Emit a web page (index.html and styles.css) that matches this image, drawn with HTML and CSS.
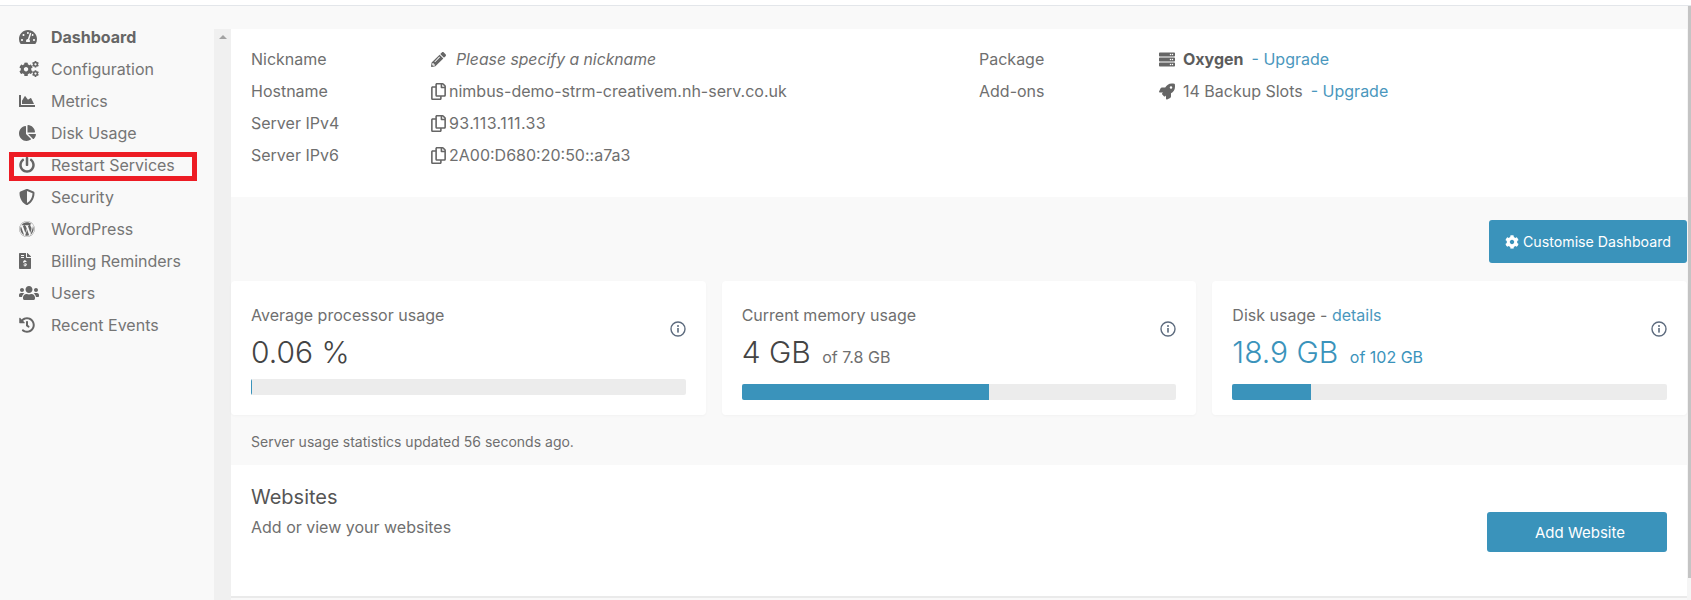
FILE: index.html
```html
<!DOCTYPE html>
<html lang="en">
<head>
    <meta charset="UTF-8">
    <meta name="viewport" content="width=device-width, initial-scale=1.0">
    <title>Server Dashboard</title>
    <link rel="stylesheet" href="styles.css">
</head>
<body>
    <!-- Icon definitions -->
    <svg class="icon-defs" xmlns="http://www.w3.org/2000/svg">
        <symbol id="i-dashboard" viewBox="0 0 576 512" preserveAspectRatio="xMinYMid"><path d="M288 32C128.94 32 0 160.94 0 320c0 52.8 14.25 102.26 39.06 144.8 5.61 9.62 16.3 15.2 27.44 15.2h443c11.14 0 21.83-5.58 27.44-15.2C561.75 422.26 576 372.8 576 320c0-159.06-128.94-288-288-288zm0 64c14.71 0 26.58 10.13 30.32 23.65-1.11 2.26-2.64 4.23-3.45 6.67l-9.22 27.67c-5.13 3.49-10.97 6.01-17.64 6.01-17.67 0-32-14.33-32-32S270.33 96 288 96zM96 384c-17.67 0-32-14.33-32-32s14.33-32 32-32 32 14.33 32 32-14.33 32-32 32zm48-160c-17.67 0-32-14.33-32-32s14.33-32 32-32 32 14.33 32 32-14.33 32-32 32zm246.77-72.41l-61.33 184C343.13 347.33 352 364.54 352 384c0 11.72-3.38 22.55-8.88 32H232.88c-5.5-9.45-8.88-20.28-8.88-32 0-33.94 26.5-61.43 59.9-63.59l61.34-184.01c4.17-12.56 17.73-19.45 30.36-15.17 12.57 4.19 19.35 17.79 15.17 30.36zm14.66 57.2l15.52-46.55c3.47-1.29 7.13-2.23 11.05-2.23 17.67 0 32 14.33 32 32s-14.33 32-32 32c-11.38-.01-20.89-6.28-26.57-15.22zM480 384c-17.67 0-32-14.33-32-32s14.33-32 32-32 32 14.33 32 32-14.33 32-32 32z"/></symbol>
        <symbol id="i-cog" viewBox="0 0 512 512"><path d="M487.4 315.7l-42.6-24.6c4.3-23.2 4.3-47 0-70.2l42.6-24.6c4.9-2.8 7.1-8.6 5.5-14-11.1-35.6-30-67.8-54.7-94.6-3.8-4.1-10-5.1-14.8-2.3L380.8 110c-17.9-15.4-38.5-27.3-60.8-35.1V25.8c0-5.6-3.9-10.5-9.4-11.7-36.7-8.2-74.3-7.8-109.2 0-5.5 1.2-9.4 6.1-9.4 11.7V75c-22.2 7.9-42.8 19.8-60.8 35.1L88.7 85.5c-4.9-2.8-11-1.9-14.8 2.3-24.7 26.7-43.6 58.9-54.7 94.6-1.7 5.4.6 11.2 5.5 14L67.3 221c-4.3 23.2-4.3 47 0 70.2l-42.6 24.6c-4.9 2.8-7.1 8.6-5.5 14 11.1 35.6 30 67.8 54.7 94.6 3.8 4.1 10 5.1 14.8 2.3l42.6-24.6c17.9 15.4 38.5 27.3 60.8 35.1v49.2c0 5.6 3.9 10.5 9.4 11.7 36.7 8.2 74.3 7.8 109.2 0 5.5-1.2 9.4-6.1 9.4-11.7v-49.2c22.2-7.9 42.8-19.8 60.8-35.1l42.6 24.6c4.9 2.8 11 1.9 14.8-2.3 24.7-26.7 43.6-58.9 54.7-94.6 1.5-5.5-.7-11.3-5.6-14.1zM256 336c-44.1 0-80-35.9-80-80s35.9-80 80-80 80 35.9 80 80-35.9 80-80 80z"/></symbol>
        <symbol id="i-cogs" viewBox="0 0 640 512">
            <use href="#i-cog" x="0" y="40" width="450" height="450"/>
            <use href="#i-cog" x="415" y="-6" width="225" height="225"/>
            <use href="#i-cog" x="415" y="290" width="225" height="225"/>
        </symbol>
        <symbol id="i-chart" viewBox="0 0 512 512" preserveAspectRatio="xMinYMid"><path d="M500 384c6.6 0 12 5.4 12 12v40c0 6.6-5.4 12-12 12H12c-6.6 0-12-5.4-12-12V76c0-6.6 5.4-12 12-12h40c6.6 0 12 5.4 12 12v308h436zM372.7 159.5L288 216l-85.3-113.7c-5.1-6.8-15.5-6.3-19.9 1L96 248v104h384l-89.9-187.8c-3.2-6.5-11.4-8.7-17.4-4.7z"/></symbol>
        <symbol id="i-pie" viewBox="0 0 544 512" preserveAspectRatio="xMinYMid"><path d="M527.79 288H290.5l158.03 158.03c6.04 6.04 15.98 6.53 22.19.68 38.7-36.46 65.32-85.61 73.13-140.86 1.34-9.46-6.51-17.85-16.06-17.85zm-15.83-64.8C503.72 103.74 408.26 8.28 288.8.04 279.68-.59 272 7.1 272 16.24V240h223.77c9.14 0 16.82-7.68 16.19-16.8zM224 288V50.71c0-9.55-8.39-17.4-17.84-16.06C86.99 51.49-4.1 155.6.14 280.37 4.5 408.51 114.83 513.59 243.03 511.98c50.4-.63 96.97-16.87 135.26-44.03 7.9-5.6 8.42-17.23 1.57-24.08L224 288z"/></symbol>
        <symbol id="i-power" viewBox="0 0 512 512" preserveAspectRatio="xMinYMid"><path d="M400 54.1c63 45 104 118.6 104 201.9 0 136.8-110.8 247.7-247.5 248C120 504.3 8.2 393 8 256.4 7.9 173.1 48.9 99.3 111.8 54.2c11.7-8.3 28-4.8 35 7.7L162.6 90c5.9 10.5 3.1 23.8-6.6 31-41.5 30.8-68 79.6-68 134.9-.1 92.3 74.5 168.1 168 168.1 91.6 0 168.6-74.2 168-169.1-.3-51.8-24.7-101.8-68.1-134-9.7-7.2-12.4-20.5-6.5-30.9l15.8-28.1c7-12.4 23.2-16.1 34.8-7.8zM296 264V24c0-13.3-10.7-24-24-24h-32c-13.3 0-24 10.7-24 24v240c0 13.3 10.7 24 24 24h32c13.3 0 24-10.7 24-24z"/></symbol>
        <symbol id="i-shield" viewBox="0 0 512 512" preserveAspectRatio="xMinYMid"><path d="M466.5 83.7l-192-80a48.15 48.15 0 0 0-36.9 0l-192 80C27.7 91.1 16 108.6 16 128c0 198.5 114.5 335.7 221.5 380.3 11.8 4.9 25.1 4.9 36.9 0C360.1 472.6 496 349.3 496 128c0-19.4-11.7-36.9-29.5-44.3zM256.1 446.3l-.1-381 175.9 73.3c-3.3 151.4-82.1 261.1-175.8 307.7z"/></symbol>
        <symbol id="i-wordpress" viewBox="0 0 512 512" preserveAspectRatio="xMinYMid"><path d="M61.7 169.4l101.5 278C92.2 413 43.3 340.2 43.3 256c0-30.9 6.6-60.1 18.4-86.6zm337.9 75.9c0-26.3-9.4-44.5-17.5-58.7-10.8-17.5-20.9-32.4-20.9-49.9 0-19.6 14.8-37.8 35.7-37.8.9 0 1.8.1 2.8.2-37.9-34.7-88.3-55.9-143.7-55.9-74.3 0-139.7 38.1-177.8 95.9 5 .2 9.7.3 13.7.3 22.2 0 56.7-2.7 56.7-2.7 11.5-.7 12.8 16.2 1.4 17.5 0 0-11.5 1.3-24.3 2l77.5 230.4L249.8 247l-33.1-90.8c-11.5-.7-22.3-2-22.3-2-11.5-.7-10.1-18.2 1.3-17.5 0 0 35.1 2.7 56 2.7 22.2 0 56.7-2.7 56.7-2.7 11.5-.7 12.8 16.2 1.4 17.5 0 0-11.5 1.3-24.3 2l76.9 228.7 21.2-70.9c9-29.4 16-50.5 16-68.7zm-139.9 29.4l-63.8 185.5c19.1 5.6 39.2 8.7 60.1 8.7 24.8 0 48.5-4.3 70.6-12.1-.6-.9-1.1-1.9-1.5-2.9l-65.4-179.2zm183-120.7c.9 6.8 1.4 14 1.4 21.9 0 21.6-4 45.8-16.2 76.2l-65 187.9C426.2 403 468.7 334.5 468.7 256c0-37-9.4-71.8-26-102zM504 256c0 136.8-111.3 248-248 248C119.2 504 8 392.7 8 256 8 119.2 119.2 8 256 8c136.7 0 248 111.2 248 248zm-11.4 0c0-130.5-106.2-236.6-236.6-236.6C125.5 19.4 19.4 125.5 19.4 256S125.6 492.6 256 492.6c130.5 0 236.6-106.1 236.6-236.6z"/></symbol>
        <symbol id="i-invoice" viewBox="0 0 384 512" preserveAspectRatio="xMinYMid"><path d="M377 105L279.1 7c-4.5-4.5-10.6-7-17-7H256v128h128v-6.1c0-6.3-2.5-12.4-7-16.9zm-153 31V0H24C10.7 0 0 10.7 0 24v464c0 13.3 10.7 24 24 24h336c13.3 0 24-10.7 24-24V160H248c-13.2 0-24-10.8-24-24zM64 72c0-4.42 3.58-8 8-8h80c4.42 0 8 3.58 8 8v16c0 4.42-3.58 8-8 8H72c-4.42 0-8-3.58-8-8V72zm0 64c0-4.42 3.58-8 8-8h80c4.42 0 8 3.58 8 8v16c0 4.42-3.58 8-8 8H72c-4.42 0-8-3.58-8-8v-16zm144 263.88V424c0 4.42-3.58 8-8 8h-16c-4.42 0-8-3.58-8-8v-24.29c-11.29-.58-22.27-4.52-31.37-11.35-3.9-2.93-4.1-8.77-.57-12.14l11.75-11.21c2.77-2.64 6.89-2.76 10.13-.73 3.87 2.42 8.26 3.72 12.82 3.72h28.11c6.5 0 11.8-5.92 11.8-13.19 0-5.95-3.61-11.19-8.77-12.73l-45-13.5c-18.59-5.58-31.58-23.42-31.58-43.39 0-24.52 19.05-44.44 42.67-45.07V232c0-4.42 3.58-8 8-8h16c4.42 0 8 3.58 8 8v24.29c11.29.58 22.27 4.51 31.37 11.35 3.9 2.93 4.1 8.77.57 12.14l-11.75 11.21c-2.77 2.64-6.89 2.76-10.13.73-3.87-2.43-8.26-3.72-12.82-3.72h-28.11c-6.5 0-11.8 5.92-11.8 13.19 0 5.95 3.61 11.19 8.77 12.73l45 13.5c18.59 5.58 31.58 23.42 31.58 43.39 0 24.53-19.05 44.44-42.67 45.07z"/></symbol>
        <symbol id="i-users" viewBox="0 0 640 512"><path d="M96 224c35.3 0 64-28.7 64-64s-28.7-64-64-64-64 28.7-64 64 28.7 64 64 64zm448 0c35.3 0 64-28.7 64-64s-28.7-64-64-64-64 28.7-64 64 28.7 64 64 64zm32 32h-64c-17.6 0-33.5 7.1-45.1 18.6 40.3 22.1 68.9 62 75.1 109.4h66c17.7 0 32-14.3 32-32v-32c0-35.3-28.7-64-64-64zm-256 0c61.9 0 112-50.1 112-112S381.9 32 320 32 208 82.1 208 144s50.1 112 112 112zm76.8 32h-8.3c-20.8 10-43.9 16-68.5 16s-47.6-6-68.5-16h-8.3C179.6 288 128 339.6 128 403.2V432c0 26.5 21.5 48 48 48h288c26.5 0 48-21.5 48-48v-28.8c0-63.6-51.6-115.2-115.2-115.2zm-223.7-13.4C161.5 263.1 145.6 256 128 256H64c-35.3 0-64 28.7-64 64v32c0 17.7 14.3 32 32 32h65.9c6.3-47.4 34.9-87.3 75.2-109.4z"/></symbol>
        <symbol id="i-history" viewBox="0 0 512 512" preserveAspectRatio="xMinYMid"><path d="M504 255.531c.253 136.64-111.18 248.372-247.82 248.468-59.015.042-113.223-20.53-155.822-54.911-11.077-8.94-11.905-25.541-1.839-35.607l11.267-11.267c8.609-8.609 22.353-9.551 31.891-1.984C173.062 425.135 212.781 440 256 440c101.705 0 184-82.311 184-184 0-101.705-82.311-184-184-184-48.814 0-93.149 18.969-126.068 49.932l50.754 50.754c10.08 10.08 2.941 27.314-11.313 27.314H24c-8.837 0-16-7.163-16-16V38.627c0-14.254 17.234-21.393 27.314-11.314l49.372 49.372C129.209 34.136 189.552 8 256 8c136.81 0 247.747 110.78 248 247.531zm-180.912 78.784l9.823-12.63c8.138-10.463 6.253-25.542-4.21-33.679L288 256.349V152c0-13.255-10.745-24-24-24h-16c-13.255 0-24 10.745-24 24v135.651l65.409 50.874c10.463 8.137 25.541 6.253 33.679-4.21z"/></symbol>
        <symbol id="i-pencil" viewBox="0 0 512 512"><path d="M497.9 142.1l-46.1 46.1c-4.7 4.7-12.3 4.7-17 0l-111-111c-4.7-4.7-4.7-12.3 0-17l46.1-46.1c18.7-18.7 49.1-18.7 67.9 0l60.1 60.1c18.8 18.7 18.8 49.1 0 67.9zM284.2 99.8L21.6 362.4.4 483.9c-2.9 16.4 11.4 30.6 27.8 27.8l121.5-21.3 262.6-262.6c4.7-4.7 4.7-12.3 0-17l-111-111c-4.8-4.7-12.4-4.7-17.1 0zM124.1 339.9c-5.5-5.5-5.5-14.3 0-19.8l154-154c5.5-5.5 14.3-5.5 19.8 0s5.5 14.3 0 19.8l-154 154c-5.5 5.5-14.3 5.5-19.8 0zM88 424h48v36.3l-64.5 11.3-31.1-31.1L51.7 376H88v48z"/></symbol>
        <symbol id="i-copy" viewBox="0 0 448 512"><path d="M433.941 65.941l-51.882-51.882A48 48 0 0 0 348.118 0H176c-26.51 0-48 21.49-48 48v48H48c-26.51 0-48 21.49-48 48v320c0 26.51 21.49 48 48 48h224c26.51 0 48-21.49 48-48v-48h80c26.51 0 48-21.49 48-48V99.882a48 48 0 0 0-14.059-33.941zM266 464H54a6 6 0 0 1-6-6V150a6 6 0 0 1 6-6h74v224c0 26.51 21.49 48 48 48h96v42a6 6 0 0 1-6 6zm128-96H182a6 6 0 0 1-6-6V54a6 6 0 0 1 6-6h106v88c0 13.255 10.745 24 24 24h88v198a6 6 0 0 1-6 6zm6-256h-64V48h9.632c1.591 0 3.117.632 4.243 1.757l48.368 48.368a6 6 0 0 1 1.757 4.243V112z"/></symbol>
        <symbol id="i-server" viewBox="0 0 512 512"><path d="M480 160H32c-17.673 0-32-14.327-32-32V64c0-17.673 14.327-32 32-32h448c17.673 0 32 14.327 32 32v64c0 17.673-14.327 32-32 32zm-48-88c-13.255 0-24 10.745-24 24s10.745 24 24 24 24-10.745 24-24-10.745-24-24-24zm-64 0c-13.255 0-24 10.745-24 24s10.745 24 24 24 24-10.745 24-24-10.745-24-24-24zm112 248H32c-17.673 0-32-14.327-32-32v-64c0-17.673 14.327-32 32-32h448c17.673 0 32 14.327 32 32v64c0 17.673-14.327 32-32 32zm-48-88c-13.255 0-24 10.745-24 24s10.745 24 24 24 24-10.745 24-24-10.745-24-24-24zm-64 0c-13.255 0-24 10.745-24 24s10.745 24 24 24 24-10.745 24-24-10.745-24-24-24zm112 248H32c-17.673 0-32-14.327-32-32v-64c0-17.673 14.327-32 32-32h448c17.673 0 32 14.327 32 32v64c0 17.673-14.327 32-32 32zm-48-88c-13.255 0-24 10.745-24 24s10.745 24 24 24 24-10.745 24-24-10.745-24-24-24zm-64 0c-13.255 0-24 10.745-24 24s10.745 24 24 24 24-10.745 24-24-10.745-24-24-24z"/></symbol>
        <symbol id="i-rocket" viewBox="0 0 512 512"><path d="M505.12 19.09c-1.19-5.53-6.66-11-12.21-12.18C460.72 0 435.51 0 410.41 0 307.18 0 245.27 55.2 199.05 128H94.84c-16.35.02-35.56 11.88-42.89 26.48L2.52 253.3A28.4 28.4 0 0 0 0 264a24 24 0 0 0 24 24h103.82l-22.48 22.47c-11.36 11.36-13 32.26 0 45.25l50.91 50.9c11.16 11.19 32.16 13.16 45.28 0L224 384.16V488a24 24 0 0 0 24 24 28.56 28.56 0 0 0 10.71-2.52l98.73-49.39c14.63-7.3 26.51-26.5 26.51-42.86V312.8c72.6-46.31 128.03-108.41 128.03-211.1.1-25.2.1-50.4-6.86-82.61zM384.04 168a40 40 0 1 1 40-40 40 40 0 0 1-40 40z"/></symbol>
        <symbol id="i-info" viewBox="0 0 16 16"><circle cx="8" cy="8" r="7" fill="none" stroke="currentColor" stroke-width="1.4"/><rect x="7.2" y="7" width="1.6" height="4.6"/><circle cx="8" cy="4.9" r="1"/></symbol>
    </svg>

    <div class="topbar"></div>

    <div class="layout">
        <!-- Side navigation -->
        <nav class="sidebar">
            <a class="nav-item nav-active"><svg class="nav-icon"><use href="#i-dashboard"/></svg>Dashboard</a>
            <a class="nav-item"><svg class="nav-icon"><use href="#i-cogs"/></svg>Configuration</a>
            <a class="nav-item"><svg class="nav-icon"><use href="#i-chart"/></svg>Metrics</a>
            <a class="nav-item"><svg class="nav-icon"><use href="#i-pie"/></svg>Disk Usage</a>
            <a class="nav-item nav-marked"><svg class="nav-icon"><use href="#i-power"/></svg>Restart Services</a>
            <a class="nav-item"><svg class="nav-icon"><use href="#i-shield"/></svg>Security</a>
            <a class="nav-item"><svg class="nav-icon"><use href="#i-wordpress"/></svg>WordPress</a>
            <a class="nav-item"><svg class="nav-icon"><use href="#i-invoice"/></svg>Billing Reminders</a>
            <a class="nav-item"><svg class="nav-icon"><use href="#i-users"/></svg>Users</a>
            <a class="nav-item"><svg class="nav-icon"><use href="#i-history"/></svg>Recent Events</a>
        </nav>

        <div class="scroll-strip"><span class="scroll-arrow"></span></div>

        <main class="content">
            <!-- Server details -->
            <section class="panel details">
                <div class="detail-col">
                    <div class="detail-row">
                        <span class="detail-label">Nickname</span>
                        <span class="detail-value"><svg class="val-icon"><use href="#i-pencil"/></svg><em class="nickname">Please specify a nickname</em></span>
                    </div>
                    <div class="detail-row">
                        <span class="detail-label">Hostname</span>
                        <span class="detail-value"><svg class="val-icon"><use href="#i-copy"/></svg>nimbus-demo-strm-creativem.nh-serv.co.uk</span>
                    </div>
                    <div class="detail-row">
                        <span class="detail-label">Server IPv4</span>
                        <span class="detail-value ip-value"><svg class="val-icon"><use href="#i-copy"/></svg>93.113.111.33</span>
                    </div>
                    <div class="detail-row">
                        <span class="detail-label">Server IPv6</span>
                        <span class="detail-value"><svg class="val-icon"><use href="#i-copy"/></svg>2A00:D680:20:50::a7a3</span>
                    </div>
                </div>
                <div class="detail-col">
                    <div class="detail-row">
                        <span class="detail-label">Package</span>
                        <span class="detail-value"><svg class="val-icon wide"><use href="#i-server"/></svg><b>Oxygen</b>&nbsp; <a class="link">- Upgrade</a></span>
                    </div>
                    <div class="detail-row">
                        <span class="detail-label">Add-ons</span>
                        <span class="detail-value"><svg class="val-icon wide"><use href="#i-rocket"/></svg>14 Backup Slots&nbsp; <a class="link">- Upgrade</a></span>
                    </div>
                </div>
            </section>

            <div class="toolbar">
                <button class="btn btn-custom"><svg class="btn-icon"><use href="#i-cog"/></svg>Customise Dashboard</button>
            </div>

            <!-- Usage cards -->
            <section class="cards">
                <div class="card">
                    <svg class="info"><use href="#i-info"/></svg>
                    <div class="card-title">Average processor usage</div>
                    <div class="card-value">0.06 %</div>
                    <div class="bar"><div class="bar-fill" style="width: 0.3%"></div></div>
                </div>
                <div class="card">
                    <svg class="info"><use href="#i-info"/></svg>
                    <div class="card-title">Current memory usage</div>
                    <div class="card-value">4 GB <small>of 7.8 GB</small></div>
                    <div class="bar"><div class="bar-fill" style="width: 57%"></div></div>
                </div>
                <div class="card">
                    <svg class="info"><use href="#i-info"/></svg>
                    <div class="card-title">Disk usage - <a class="link">details</a></div>
                    <div class="card-value card-link">18.9 GB <small>of 102 GB</small></div>
                    <div class="bar"><div class="bar-fill" style="width: 18.1%"></div></div>
                </div>
            </section>

            <p class="stats-note">Server usage statistics updated 56 seconds ago.</p>

            <!-- Websites -->
            <section class="panel websites">
                <div>
                    <h2>Websites</h2>
                    <p>Add or view your websites</p>
                </div>
                <button class="btn btn-add">Add Website</button>
            </section>
        </main>

        <div class="page-scroll"><div class="page-thumb"></div></div>
    </div>
</body>
</html>
```

FILE: styles.css
```css
html, body {
    height: 600px;
    overflow: hidden;
}
body {
    margin: 0;
    font-family: Inter, "Liberation Sans", sans-serif;
    font-size: 16px;
    color: #6f6f6f;
    background-color: #f9f9f9;
}
.icon-defs {
    display: none;
}
svg {
    fill: currentColor;
}
.topbar {
    height: 5px;
    background-color: #fff;
    border-bottom: 1px solid #e3e6ea;
}
.layout {
    display: flex;
    height: 594px;
}
a.link {
    color: #4a97bd;
}

/* Sidebar */
.sidebar {
    width: 214px;
    flex-shrink: 0;
    box-sizing: border-box;
    padding-top: 15px;
}
.nav-item {
    position: relative;
    display: flex;
    align-items: center;
    height: 32px;
    padding-left: 19px;
    color: #757575;
}
.nav-active {
    font-weight: 700;
    color: #666;
}
.nav-icon {
    width: 20px;
    height: 16px;
    margin-right: 12px;
    color: #666;
}
.nav-marked::after {
    content: "";
    position: absolute;
    left: 9px;
    top: 3px;
    width: 178px;
    height: 19px;
    border: 5px solid #ed1c24;
}
.scroll-strip {
    width: 17px;
    flex-shrink: 0;
    margin-top: 23px;
    background-color: #f0f0f0;
    display: flex;
    justify-content: center;
    padding-top: 6px;
    box-sizing: border-box;
}
.scroll-arrow {
    width: 0;
    height: 0;
    border-left: 4px solid transparent;
    border-right: 4px solid transparent;
    border-bottom: 4px solid #a3a3a3;
}

/* Main area */
.content {
    width: 1456px;
    flex-shrink: 0;
    padding-top: 23px;
}
.panel {
    background-color: #fff;
}
.details {
    display: grid;
    grid-template-columns: 728px 1fr;
    height: 168px;
    box-sizing: border-box;
    padding: 14px 20px 0;
}
.detail-row {
    display: flex;
    align-items: center;
    height: 32px;
}
.detail-label {
    width: 180px;
    flex-shrink: 0;
}
.detail-value {
    display: flex;
    align-items: center;
    white-space: pre;
}
.detail-value b {
    color: #5c5c5c;
}
.detail-value .link {
    margin-left: -1px;
}
.ip-value {
    letter-spacing: 0.4px;
}
.val-icon {
    width: 15px;
    height: 17px;
    margin-right: 3px;
    color: #666;
}
.val-icon.wide {
    width: 16px;
    margin-right: 8px;
}
.nickname {
    margin-left: 7px;
    font-size: 15.75px;
}
.toolbar {
    display: flex;
    justify-content: flex-end;
    padding: 23px 0 18px;
}
.btn {
    border: none;
    border-radius: 3px;
    background-color: #3a93bb;
    color: #fff;
    font-family: inherit;
    font-weight: 400;
    padding: 0;
}
.btn-custom {
    display: flex;
    align-items: center;
    justify-content: center;
    width: 198px;
    height: 43px;
    font-size: 14.2px;
}
.btn-icon {
    width: 14px;
    height: 14px;
    margin-right: 4px;
}
.cards {
    display: flex;
    gap: 16px;
}
.card {
    position: relative;
    flex: 1;
    box-sizing: border-box;
    height: 134px;
    padding: 24px 20px 20px;
    background-color: #fff;
    border-radius: 4px;
    box-shadow: 0 1px 3px rgba(0, 0, 0, 0.03);
}
.info {
    position: absolute;
    right: 20px;
    top: 40px;
    width: 16px;
    height: 16px;
    color: #5d6b7e;
}
.card-title {
    line-height: 20px;
}
.card-value {
    margin-top: 10px;
    font-size: 30px;
    font-weight: 300;
    line-height: 34px;
    color: #444;
}
.card-value small {
    font-size: 16px;
    font-weight: 400;
    color: #6f6f6f;
    margin-left: 3px;
}
.card-link, .card-link small {
    color: #3a93bb;
}
.bar {
    margin-top: 10px;
    height: 16px;
    background-color: #ececec;
    border-radius: 2px;
    overflow: hidden;
}
.bar-fill {
    height: 100%;
    background-color: #3a93bb;
}
.stats-note {
    margin: 0;
    padding-left: 20px;
    height: 50px;
    line-height: 54px;
    font-size: 14px;
}
.websites {
    display: flex;
    justify-content: space-between;
    height: 133px;
    box-sizing: border-box;
    padding: 20px 20px 0;
    border-bottom: 2px solid #eaeaea;
}
.websites h2 {
    margin: 0;
    font-size: 20px;
    font-weight: 400;
    line-height: 24px;
    color: #555;
}
.websites p {
    margin: 6px 0 0;
    line-height: 24px;
}
.btn-add {
    width: 180px;
    height: 40px;
    margin-top: 27px;
    padding-left: 6px;
    font-size: 15px;
}
.page-scroll {
    flex: 1;
    display: flex;
    justify-content: flex-end;
    background-color: #f5f5f5;
}
.page-thumb {
    width: 3px;
    height: 572px;
    background-color: #c4c4c4;
}
```
